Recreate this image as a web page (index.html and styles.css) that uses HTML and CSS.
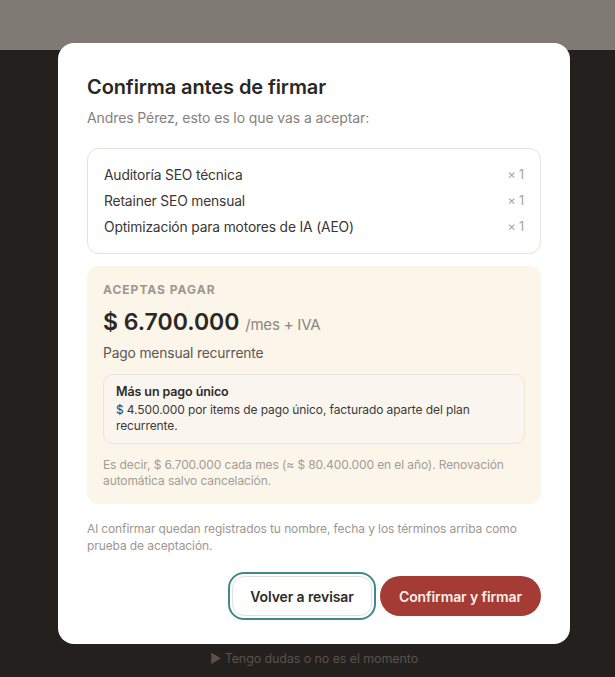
FILE: index.html
```html
<!DOCTYPE html>
<html>

<head>
  <meta charset="UTF-8">
  <title>Confirma antes de firmar</title>
  <link rel="stylesheet" href="styles.css">
</head>

<body>
  <div class="stage">
    <div class="modal">
      <h2 class="modal-title">Confirma antes de firmar</h2>
      <p class="modal-sub">Andres Pérez, esto es lo que vas a aceptar:</p>

      <ul class="items">
        <li class="item"><span>Auditoría SEO técnica</span><span class="qty">× 1</span></li>
        <li class="item"><span>Retainer SEO mensual</span><span class="qty">× 1</span></li>
        <li class="item"><span>Optimización para motores de IA (AEO)</span><span class="qty">× 1</span></li>
      </ul>

      <div class="pay">
        <div class="pay-label">ACEPTAS PAGAR</div>
        <div class="pay-price">$ 6.700.000 <span class="pay-unit">/mes + IVA</span></div>
        <div class="pay-kind">Pago mensual recurrente</div>
        <div class="pay-extra">
          <div class="pay-extra_title">Más un pago único</div>
          <div class="pay-extra_text">$ 4.500.000 por items de pago único, facturado aparte del plan recurrente.</div>
        </div>
        <p class="pay-note">Es decir, $ 6.700.000 cada mes (≈ $ 80.400.000 en el año). Renovación automática salvo cancelación.</p>
      </div>

      <p class="legal">Al confirmar quedan registrados tu nombre, fecha y los términos arriba como prueba de aceptación.</p>

      <div class="actions">
        <button class="btn btn-ghost">Volver a revisar</button>
        <button class="btn btn-primary">Confirmar y firmar</button>
      </div>
    </div>

    <div class="doubts">▶ Tengo dudas o no es el momento</div>
  </div>
</body>

</html>
```

FILE: styles.css
```css
* {
  box-sizing: border-box;
}

body {
  margin: 0;
  min-height: 677px;
  background: linear-gradient(#7f7a73 0, #7f7a73 50px, #24201d 50px);
  font-family: Inter, "Noto Sans", sans-serif;
  color: #2b2825;
}

.stage {
  width: 512px;
  margin-left: 58px;
  padding-top: 43px;
}

.modal {
  background: #fff;
  border-radius: 16px;
  padding: 29px 29px 28px;
}

.modal-title {
  margin: 0;
  font-size: 20px;
  line-height: 30px;
  font-weight: 600;
  letter-spacing: -0.1px;
  color: #2a2724;
}

.modal-sub {
  margin: 6px 0 0;
  font-size: 14px;
  line-height: 20px;
  letter-spacing: -0.1px;
  color: #86817b;
}

.items {
  list-style: none;
  margin: 20px 0 0;
  padding: 13px 16px 13px 16px;
  border: 1px solid #e6e2dc;
  border-radius: 12px;
}

.item {
  display: flex;
  justify-content: space-between;
  font-size: 13.8px;
  line-height: 26px;
  letter-spacing: -0.15px;
  color: #3a3632;
}

.qty {
  font-size: 12.5px;
  color: #a7a29b;
}

.pay {
  margin-top: 12px;
  background: #fbf5ea;
  border-radius: 12px;
  padding: 16px 16px 15px;
}

.pay-label {
  font-size: 12px;
  line-height: 16px;
  font-weight: 700;
  letter-spacing: 1px;
  color: #9d978f;
}

.pay-price {
  margin-top: 8px;
  font-size: 23px;
  line-height: 32px;
  font-weight: 600;
  color: #2a2724;
}

.pay-unit {
  font-size: 15px;
  font-weight: 400;
  letter-spacing: -0.2px;
  color: #8a857f;
}

.pay-kind {
  margin-top: 2px;
  font-size: 13.8px;
  line-height: 20px;
  letter-spacing: -0.15px;
  color: #5c5752;
}

.pay-extra {
  margin-top: 11px;
  background: #faf6ef;
  border: 1px solid #ebe6dd;
  border-radius: 10px;
  padding: 8px 12px 9px;
}

.pay-extra_title {
  font-size: 12.5px;
  line-height: 18px;
  font-weight: 600;
  letter-spacing: -0.1px;
  color: #2e2b27;
}

.pay-extra_text {
  margin-top: 1px;
  font-size: 12px;
  line-height: 16px;
  letter-spacing: -0.1px;
  color: #3d3935;
}

.pay-note {
  margin: 13px 0 0;
  font-size: 12px;
  line-height: 16px;
  letter-spacing: -0.1px;
  color: #a39d95;
}

.legal {
  margin: 16px 0 0;
  font-size: 12px;
  line-height: 17px;
  letter-spacing: -0.1px;
  color: #9c9791;
}

.actions {
  display: flex;
  justify-content: flex-end;
  gap: 8px;
  margin-top: 22px;
}

.btn {
  height: 40px;
  border-radius: 20px;
  font-family: inherit;
  font-size: 14px;
  font-weight: 600;
  letter-spacing: -0.1px;
  padding: 0;
  border: none;
  white-space: nowrap;
  cursor: pointer;
}

.btn-ghost {
  width: 140px;
  background: #fff;
  color: #2e2b27;
  border: 1px solid #e3e0da;
  border-radius: 12px;
  outline: 2px solid #3f8a89;
  outline-offset: 2px;
}

.btn-primary {
  width: 161px;
  background: #a43c35;
  color: #fbeee9;
}

.doubts {
  margin-top: 7px;
  text-align: center;
  font-size: 12.5px;
  line-height: 16px;
  letter-spacing: -0.1px;
  color: #57524c;
}
```
